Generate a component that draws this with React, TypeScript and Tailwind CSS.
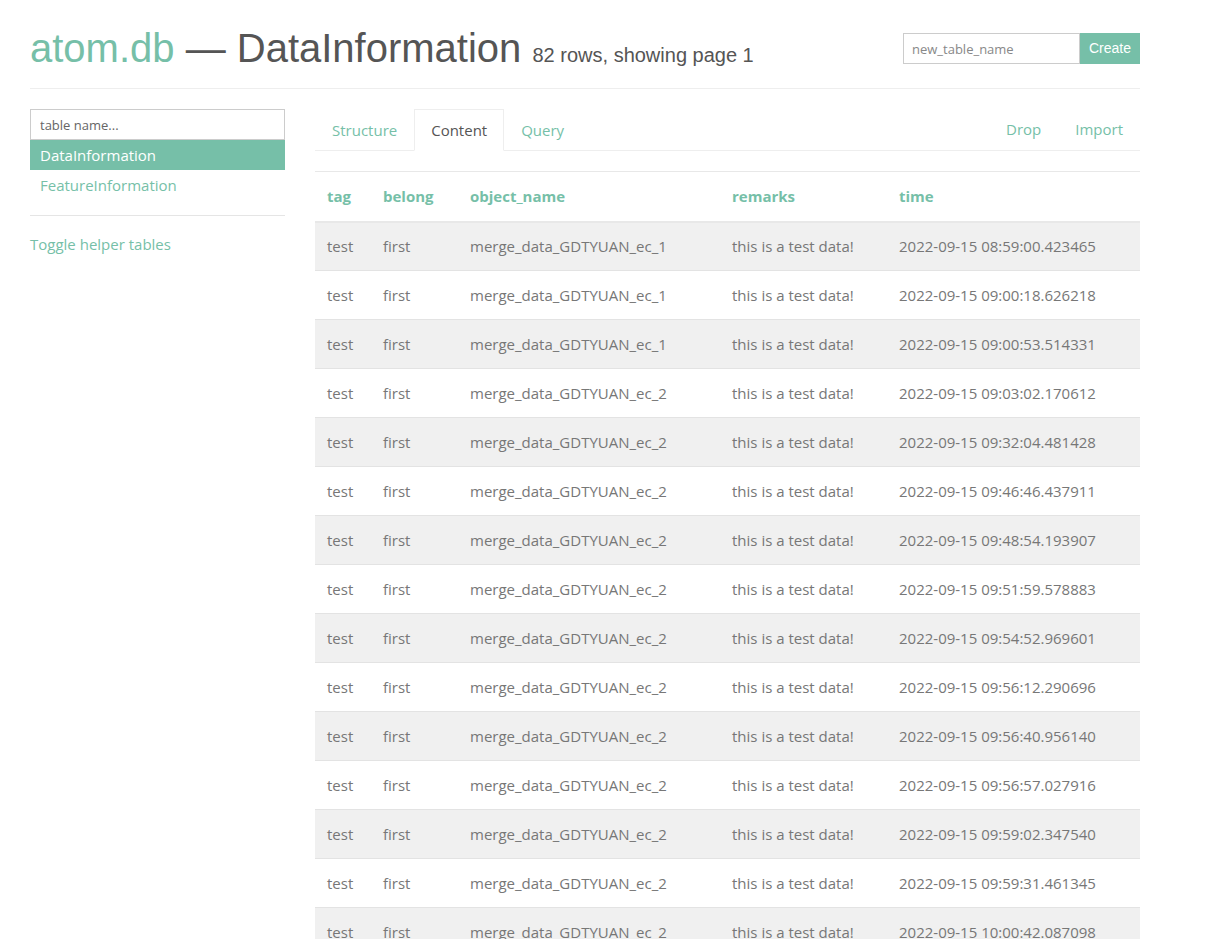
import React from "react";

const green = "text-[#76bfa8]";

type Row = {
  tag: string;
  belong: string;
  objectName: string;
  remarks: string;
  time: string;
};

const times = [
  ["1", "08:59:00.423465"],
  ["1", "09:00:18.626218"],
  ["1", "09:00:53.514331"],
  ["2", "09:03:02.170612"],
  ["2", "09:32:04.481428"],
  ["2", "09:46:46.437911"],
  ["2", "09:48:54.193907"],
  ["2", "09:51:59.578883"],
  ["2", "09:54:52.969601"],
  ["2", "09:56:12.290696"],
  ["2", "09:56:40.956140"],
  ["2", "09:56:57.027916"],
  ["2", "09:59:02.347540"],
  ["2", "09:59:31.461345"],
  ["2", "10:00:42.087098"],
];

const rows: Row[] = times.map(([ec, t]) => ({
  tag: "test",
  belong: "first",
  objectName: `merge_data_GDTYUAN_ec_${ec}`,
  remarks: "this is a test data!",
  time: `2022-09-15 ${t}`,
}));

function Header() {
  return (
    <div className="flex items-start justify-between border-b border-[#eeeeee] pb-[11px]">
      <h1 className="pt-[26px] text-[40px] leading-[44px] text-[#555555] font-['Liberation_Sans',Arial,sans-serif]">
        <span className={green}>atom.db</span> — DataInformation{" "}
        <small className="text-[20px] text-[#555555]">82 rows, showing page 1</small>
      </h1>
      <form className="mt-[33px] flex">
        <input
          className="h-[31px] w-[177px] border border-[#cccccc] px-2 text-[13px] text-[#555] placeholder:text-[#888] outline-none"
          placeholder="new_table_name"
        />
        <button
          type="button"
          className="h-[31px] w-[60px] bg-[#76bfa8] text-[14px] text-white font-['Liberation_Sans',Arial,sans-serif]"
        >
          Create
        </button>
      </form>
    </div>
  );
}

function Sidebar() {
  return (
    <div className="w-[255px] shrink-0">
      <input
        className="block h-[31px] w-full border border-[#cccccc] px-[9px] text-[13px] text-[#555] placeholder:text-[#666] outline-none"
        placeholder="table name..."
      />
      <ul className="text-[15px]">
        <li className="h-[30px] bg-[#76bfa8] px-[10px] leading-[30px] text-white">DataInformation</li>
        <li className={`h-[30px] px-[10px] leading-[30px] ${green}`}>FeatureInformation</li>
      </ul>
      <div className="mt-[15px] border-t border-[#e5e5e5]" />
      <a className={`mt-[17px] block text-[15px] ${green}`}>Toggle helper tables</a>
    </div>
  );
}

function Tabs() {
  const left = ["Structure", "Content", "Query"];
  return (
    <div className="flex h-[42px] justify-between border-b border-[#eeeeee] text-[15px]">
      <div className="flex">
        {left.map((t) =>
          t === "Content" ? (
            <div
              key={t}
              className="-mb-px flex h-[42px] items-center border border-[#eeeeee] border-b-white bg-white px-[16px] text-[#555555]"
            >
              {t}
            </div>
          ) : (
            <div key={t} className={`flex h-[42px] items-center px-[17px] ${green}`}>
              {t}
            </div>
          )
        )}
      </div>
      <div className="flex">
        <div className={`flex items-center px-[17px] ${green}`}>Drop</div>
        <div className={`flex items-center px-[17px] ${green}`}>Import</div>
      </div>
    </div>
  );
}

function DataTable() {
  const cols = [
    { key: "tag", w: "w-[56px]" },
    { key: "belong", w: "w-[87px]" },
    { key: "object_name", w: "w-[262px]" },
    { key: "remarks", w: "w-[167px]" },
    { key: "time", w: "" },
  ];
  return (
    <table className="mt-[20px] w-full table-fixed border-collapse text-[15px] text-[#777777]">
      <thead>
        <tr className="h-[50px] border-t border-b-2 border-[#e8e8e8]">
          {cols.map((c) => (
            <th key={c.key} className={`${c.w} px-[12px] text-left font-bold ${green}`}>
              {c.key}
            </th>
          ))}
        </tr>
      </thead>
      <tbody>
        {rows.map((r, i) => (
          <tr key={i} className={`h-[49px] border-t border-[#e3e3e3] ${i % 2 === 0 ? "bg-[#f0f0f0]" : "bg-white"}`}>
            <td className="px-[12px]">{r.tag}</td>
            <td className="px-[12px]">{r.belong}</td>
            <td className="px-[12px]">{r.objectName}</td>
            <td className="px-[12px]">{r.remarks}</td>
            <td className="px-[12px]">{r.time}</td>
          </tr>
        ))}
      </tbody>
    </table>
  );
}

export default function App() {
  return (
    <div className="min-h-screen bg-white font-['Open_Sans','Noto_Sans',sans-serif]">
      <div className="ml-[30px] w-[1110px]">
        <Header />
        <div className="mt-[20px] flex gap-[30px]">
          <Sidebar />
          <div className="flex-1">
            <Tabs />
            <DataTable />
          </div>
        </div>
      </div>
    </div>
  );
}
